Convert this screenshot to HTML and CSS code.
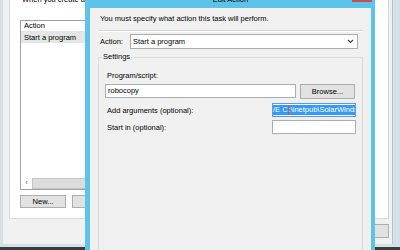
FILE: index.html
```html
<!DOCTYPE html>
<html lang="en">
<head>
    <meta charset="UTF-8">
    <title>Edit Action</title>
    <link rel="stylesheet" href="styles.css">
</head>
<body>
    <div class="win back">
        <div class="back-client">
            <div class="tab-page">
                <p class="intro">When you create a task, you must specify the action that will occur when your task starts.</p>
                <div class="listbox">
                    <div class="lb-head">Action</div>
                    <div class="lb-row sel">Start a program</div>
                    <div class="lb-fill"></div>
                    <div class="hscroll"><span class="arrow">&lsaquo;</span><span class="thumb"></span></div>
                </div>
                <div class="btn-row">
                    <button class="btn small">New...</button>
                    <button class="btn small">Edit...</button>
                    <button class="btn small">Delete</button>
                </div>
            </div>
            <div class="foot-row">
                <button class="btn foot">OK</button>
            </div>
        </div>
    </div>

    <div class="win dialog">
        <div class="titlebar">
            <span class="title">Edit Action</span>
            <span class="close"></span>
        </div>
        <div class="client">
            <p class="msg">You must specify what action this task will perform.</p>
            <div class="sep"></div>
            <div class="action-row">
                <span class="action-lbl">Action:</span>
                <div class="select">
                    <span>Start a program</span>
                    <svg width="7" height="5" viewBox="0 0 7 5"><polyline points="1,1 3.5,3.5 6,1" fill="none" stroke="#444" stroke-width="1.2"/></svg>
                </div>
            </div>
            <fieldset class="group">
                <legend>Settings</legend>
                <div class="lbl">Program/script:</div>
                <div class="prog-row">
                    <div class="field prog">robocopy</div>
                    <button class="btn browse">Browse...</button>
                </div>
                <div class="opt-row first">
                    <span class="opt-lbl">Add arguments (optional):</span>
                    <div class="field short focus"><span class="selected">/E C<span class="caret"></span>:\inetpub\SolarWinds\</span></div>
                </div>
                <div class="opt-row">
                    <span class="opt-lbl">Start in (optional):</span>
                    <div class="field short"></div>
                </div>
            </fieldset>
        </div>
    </div>
</body>
</html>
```

FILE: styles.css
```css
* {
    box-sizing: border-box;
}
body {
    margin: 0;
    width: 400px;
    height: 250px;
    overflow: hidden;
    position: relative;
    background: #3b3b3b;
    font-family: "Liberation Sans", Arial, sans-serif;
    font-size: 7.5px;
    color: #000;
}
p {
    margin: 0;
}
.win {
    position: absolute;
}
.btn {
    background: #e1e1e1;
    border: 1px solid #adadad;
    padding: 0;
    font: inherit;
    color: #000;
}

/* window behind */
.back {
    left: -3px;
    top: -40px;
    width: 403px;
    height: 287px;
    background: #d3e0e6;
    padding: 0 7px 3px 6px;
}
.back-client {
    height: 100%;
    background: #f0f0f0;
    border-right: 1px solid #b8c3c8;
    padding: 10px 3px 0 6px;
    display: flex;
    flex-direction: column;
}
.tab-page {
    height: 249px;
    background: #fff;
    border: 1px solid #d9d9d9;
    padding: 24px 10px 0 10px;
    overflow: hidden;
}
.intro {
    margin: 0 0 15px 2px;
    line-height: 10px;
    white-space: nowrap;
}
.listbox {
    width: 350px;
    height: 170px;
    border: 1px solid #9da0a6;
    display: flex;
    flex-direction: column;
}
.lb-head {
    height: 11px;
    line-height: 10px;
    padding-left: 3px;
    border-bottom: 1px solid #e5e5e5;
}
.lb-row {
    height: 11px;
    line-height: 11px;
    padding-left: 3px;
}
.lb-row.sel {
    background: #e5e5e5;
}
.lb-fill {
    flex: 1;
}
.hscroll {
    height: 11px;
    display: flex;
    background: #e8e8e8;
}
.hscroll .arrow {
    width: 11px;
    text-align: center;
    line-height: 10px;
    color: #606060;
    background: #fff;
}
.hscroll .thumb {
    flex: 1;
    background: #dcdcdc;
    border: 1px solid #c6c6c6;
}
.btn-row {
    display: flex;
    gap: 6px;
    margin-top: 5px;
}
.btn.small {
    width: 46px;
    height: 13px;
}
.foot-row {
    display: flex;
    justify-content: flex-end;
    margin-top: 5px;
}
.btn.foot {
    width: 48px;
    height: 14px;
}

/* edit action dialog */
.dialog {
    left: 85px;
    top: -16px;
    width: 290px;
    height: 266px;
    background: #5ec3e8;
    padding: 0 4px 0 5px;
    display: flex;
    flex-direction: column;
}
.titlebar {
    height: 24px;
    position: relative;
    text-align: center;
    padding-top: 11px;
    line-height: 10px;
    color: #000;
}
.close {
    position: absolute;
    right: -1px;
    top: 0;
    width: 20px;
    height: 18px;
    background: #c7504f;
}
.client {
    flex: 1;
    background: #f0f0f0;
    padding: 6px 8px 0;
    overflow: hidden;
}
.msg {
    line-height: 10px;
    margin: 0 0 6px 2px;
}
.sep {
    height: 2px;
    border-top: 1px solid #d5d5d5;
    border-bottom: 1px solid #fff;
}
.action-row {
    display: flex;
    align-items: center;
    margin-top: 2px;
    height: 15px;
}
.action-lbl {
    width: 32px;
    padding-left: 2px;
}
.select {
    width: 228px;
    height: 15px;
    background: #fff;
    border: 1px solid #acacac;
    padding: 0 3px 0 2px;
    display: flex;
    align-items: center;
    justify-content: space-between;
}
.group {
    margin: 3px 0 0;
    padding: 0 6px;
    height: 200px;
    border: 1px solid #dcdcdc;
    min-width: 0;
}
.group legend {
    padding: 0 1px;
    margin-left: -3px;
    line-height: 10px;
}
.lbl {
    margin: 9px 0 0 2px;
    line-height: 10px;
}
.prog-row {
    display: flex;
    gap: 4px;
    margin-top: 3px;
}
.field {
    height: 14px;
    background: #fff;
    border: 1px solid #abadb3;
    padding-left: 2px;
    line-height: 12px;
    white-space: nowrap;
    overflow: hidden;
}
.field.prog {
    width: 191px;
}
.btn.browse {
    width: 55px;
    height: 15px;
}
.opt-row {
    display: flex;
    align-items: center;
    justify-content: space-between;
    margin-top: 3px;
}
.opt-row.first {
    margin-top: 4px;
}
.opt-lbl {
    padding-left: 2px;
}
.field.short {
    width: 84px;
}
.field.focus {
    border-color: #569de5;
    padding-left: 0;
}
.selected {
    display: inline-block;
    background: #3399ff;
    color: #fff;
    line-height: 10px;
    margin-top: 1px;
    padding-right: 4px;
}
.caret {
    display: inline-block;
    width: 1px;
    height: 10px;
    background: #d9541e;
    vertical-align: top;
}
```
